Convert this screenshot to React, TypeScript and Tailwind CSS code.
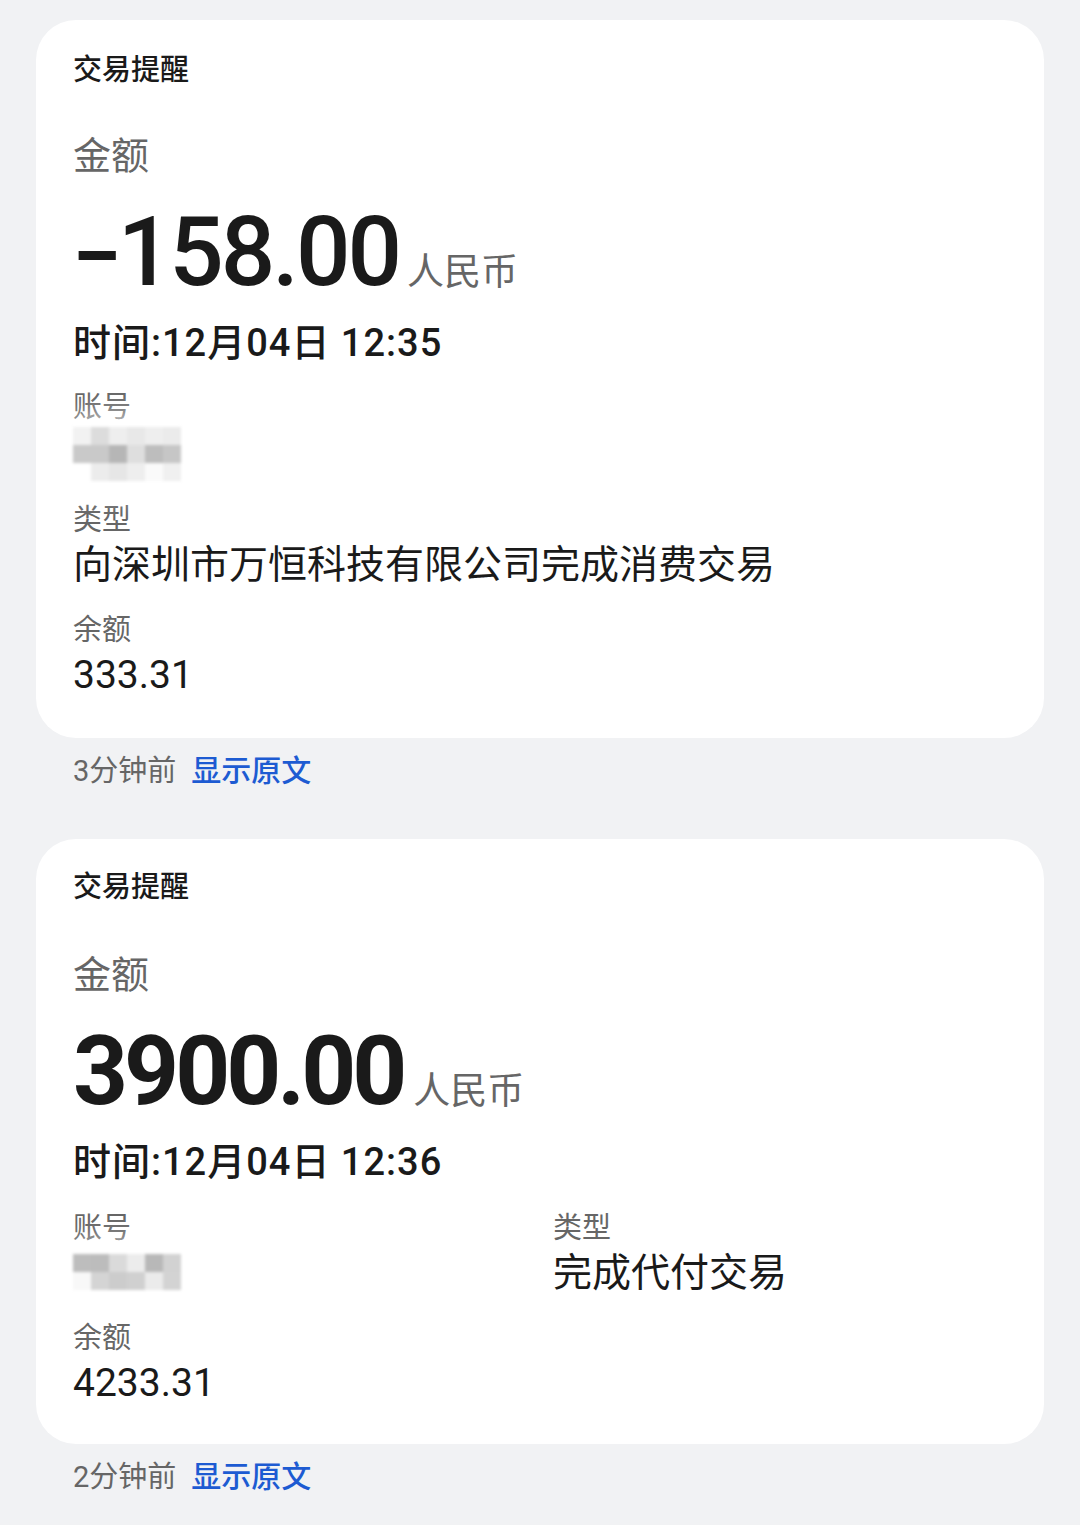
import React from 'react'

const font = { fontFamily: '"Roboto", "Noto Sans CJK SC", sans-serif' }

// pixelated mosaic that hides the account number
const Mosaic = ({ rows }: { rows: string[][] }) => (
  <div className="relative w-[150px]">
    <div className="absolute -inset-3 rounded-[30px] bg-white/70 blur-md" />
    <div className="relative flex flex-col blur-[1.5px]">
      {rows.map((row, i) => (
        <div key={i} className="flex">
          {row.map((c, j) => (
            <div key={j} className="h-[18px] w-[18px]" style={{ backgroundColor: c }} />
          ))}
        </div>
      ))}
    </div>
  </div>
)

const Label = ({ children }: { children: React.ReactNode }) => (
  <div className="text-[29px] leading-[40px] text-[#666]">{children}</div>
)

const Value = ({ children }: { children: React.ReactNode }) => (
  <div className="text-[39px] leading-[50px] text-[#1a1a1a]">{children}</div>
)

const Footer = ({ when }: { when: string }) => (
  <div className="mt-[13px] flex gap-[15px] pl-[73px] text-[29px] leading-[40px]">
    <span className="text-[#666]">{when}</span>
    <span className="text-[30px] font-medium text-[#1d5bd2]">显示原文</span>
  </div>
)

const mosaicA = [
  ['#f2f2f2', '#dcdcdc', '#eeeeee', '#e8e8e8', '#eeeeee', '#ebebeb'],
  ['#c9c9c9', '#c9c9c9', '#b6b6b6', '#dedede', '#bdbdbd', '#c6c6c6'],
  ['#ffffff', '#ececec', '#e6e6e6', '#eeeeee', '#fafafa', '#f0f0f0'],
]

const mosaicB = [
  ['#bdbdbd', '#bcbcbc', '#dadada', '#ececec', '#b8b8b8', '#d2d2d2'],
  ['#f8f8f8', '#d4d4d4', '#cccccc', '#d0d0d0', '#ebebeb', '#d3d3d3'],
]

export default function App() {
  return (
    <div className="min-h-[1525px] w-full bg-[#f1f2f4] pt-5" style={font}>
      {/* first notice */}
      <div className="mx-9 rounded-[40px] bg-white px-[37px] pb-[38px] pt-[30px]">
        <div className="text-[29px] font-medium leading-[40px] text-[#1a1a1a]">交易提醒</div>
        <div className="mt-[41px] text-[38px] leading-[50px] text-[#666]">金额</div>
        <div className="mt-[23px] flex items-baseline">
          <span className="text-[96px] font-medium leading-none tracking-[-3px] text-[#1a1a1a]">
            <span className="mr-[15px] inline-block origin-left scale-x-[1.5]">-</span>158.00
          </span>
          <span className="ml-[8px] text-[37px] text-[#666]">人民币</span>
        </div>
        <div className="mt-[17px] text-[38px] font-medium leading-[50px] tracking-[1px] text-[#1a1a1a]">时间:12月04日 12:35</div>
        <div className="mt-[19px]">
          <Label>账号</Label>
          <Mosaic rows={mosaicA} />
        </div>
        <div className="mt-[19px]">
          <Label>类型</Label>
          <Value>向深圳市万恒科技有限公司完成消费交易</Value>
        </div>
        <div className="mt-[20px]">
          <Label>余额</Label>
          <Value>333.31</Value>
        </div>
      </div>
      <Footer when="3分钟前" />

      {/* second notice */}
      <div className="mx-9 mt-[48px] rounded-[40px] bg-white px-[37px] pb-[36px] pt-[28px]">
        <div className="text-[29px] font-medium leading-[40px] text-[#1a1a1a]">交易提醒</div>
        <div className="mt-[43px] text-[38px] leading-[50px] text-[#666]">金额</div>
        <div className="mt-[23px] flex items-baseline">
          <span className="text-[96px] font-bold leading-none tracking-[-4px] text-[#1a1a1a]">3900.00</span>
          <span className="ml-[10px] text-[37px] text-[#666]">人民币</span>
        </div>
        <div className="mt-[18px] text-[38px] font-medium leading-[50px] tracking-[1px] text-[#1a1a1a]">时间:12月04日 12:36</div>
        <div className="mt-[21px] grid grid-cols-2">
          <div>
            <Label>账号</Label>
            <div className="mt-[6px]">
              <Mosaic rows={mosaicB} />
            </div>
          </div>
          <div className="pl-[13px]">
            <Label>类型</Label>
            <Value>完成代付交易</Value>
          </div>
        </div>
        <div className="mt-[20px]">
          <Label>余额</Label>
          <Value>4233.31</Value>
        </div>
      </div>
      <Footer when="2分钟前" />
    </div>
  )
}
